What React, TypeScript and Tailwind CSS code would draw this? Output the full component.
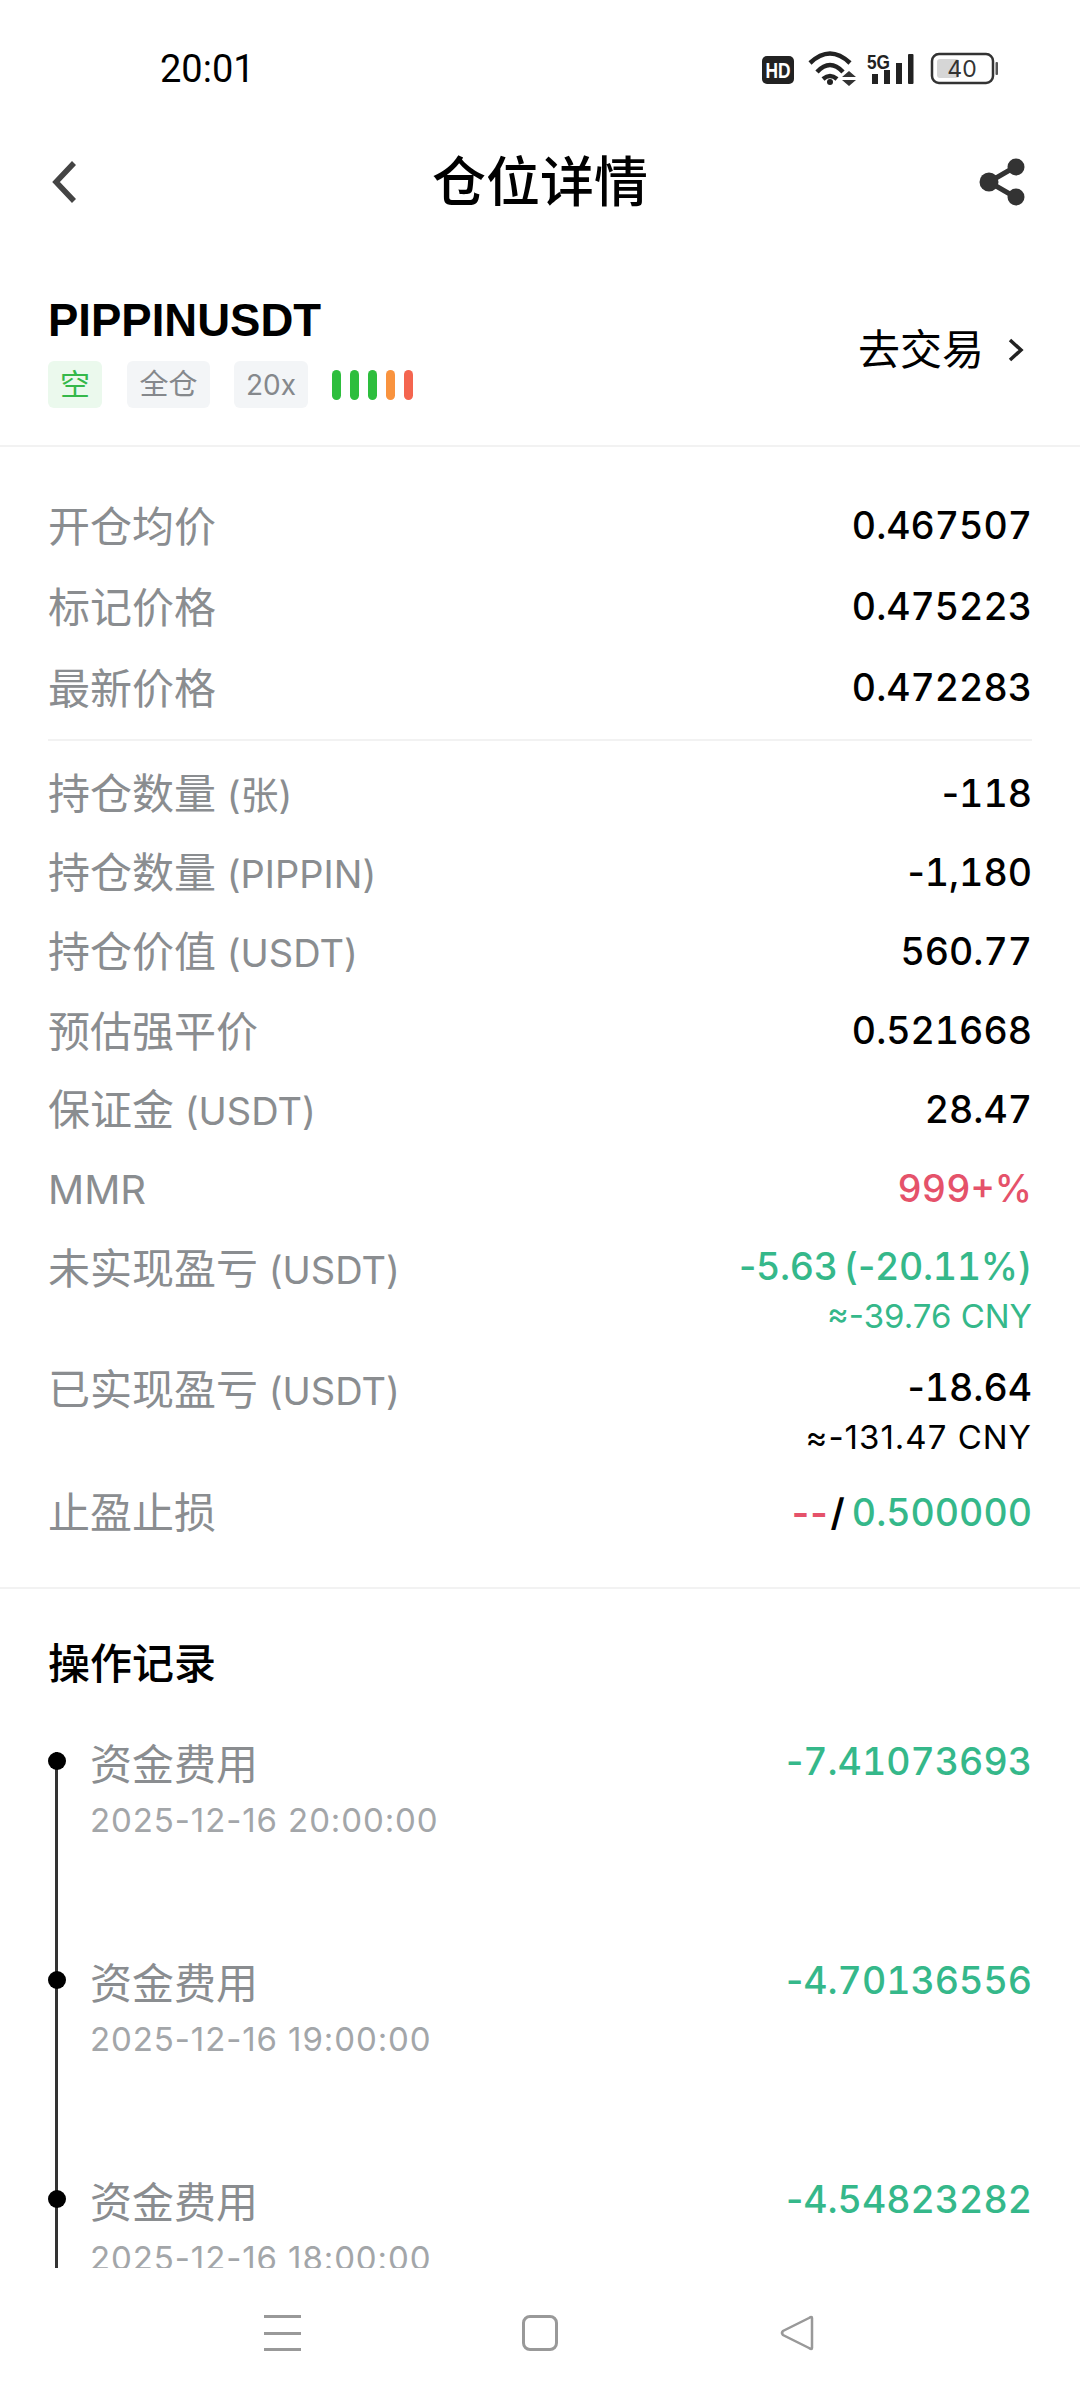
const cjk = "font-['Inter','Noto_Sans_CJK_SC',sans-serif]";

function StatusIcons() {
  return (
    <div className="flex items-center absolute left-[762px] top-[50px]">
      <svg width="238" height="38" viewBox="0 0 238 38">
        {/* HD */}
        <rect x="0" y="6" width="32" height="28" rx="5" fill="#222" />
        <text x="16" y="28" textAnchor="middle" fontSize="22" fontWeight="800" fontFamily="Liberation Sans" fill="#fff" textLength="25" lengthAdjust="spacingAndGlyphs">HD</text>
        {/* wifi */}
        <g fill="none" stroke="#222" strokeWidth="4.500">
          <path d="M48 13 Q68 -6 88 13" />
          <path d="M55 22 Q68 8 81 22" />
          <path d="M61 29 Q68 23 75 29" />
        </g>
        <circle cx="68" cy="32" r="3" fill="#222" />
        <path d="M80 27 L87 21 L94 27 Z M80 30 L94 30 L87 36 Z" fill="#333" />
        {/* 5G + signal */}
        <text x="105" y="19" fontSize="20" fontWeight="800" fontFamily="Liberation Sans" fill="#222" textLength="23" lengthAdjust="spacingAndGlyphs">5G</text>
        <rect x="110" y="24" width="6" height="10" fill="#222" />
        <rect x="122" y="20" width="6" height="14" fill="#222" />
        <rect x="134" y="13" width="6" height="21" fill="#222" />
        <rect x="146" y="4" width="5.500" height="30" rx="1" fill="#222" />
        {/* battery */}
        <rect x="170" y="4" width="61" height="29" rx="7" fill="none" stroke="#333" strokeWidth="2.500" />
        <rect x="175" y="9" width="22" height="19" rx="3" fill="#d6d6d6" />
        <text x="200" y="27" textAnchor="middle" fontSize="23" fontFamily="Inter" fill="#333">40</text>
        <rect x="233.500" y="12" width="2.500" height="13" rx="1" fill="#555" />
      </svg>
    </div>
  );
}

// digits are fixed width in the reference but the minus sign is narrow
function Num({ value }: { value: string }) {
  return (
    <span className="text-[37.500px] font-medium">
      {value.split(/(-)/).map((part, i) =>
        part === "-" ? <span key={i}>-</span> : <span key={i} className="tabular-nums">{part}</span>
      )}
    </span>
  );
}

function Label({ text, unit }: { text: string; unit?: string }) {
  return (
    <span className="text-[42px] text-[#8a8d90] leading-[80px]">
      {text}
      {unit && <span className="text-[38px]"> {unit}</span>}
    </span>
  );
}

function Row({ text, unit, value, color = "text-black" }: { text: string; unit?: string; value: string; color?: string }) {
  return (
    <div className="flex items-center justify-between h-[79px]">
      <Label text={text} unit={unit} />
      <span className={color}><Num value={value} /></span>
    </div>
  );
}

function TallRow({ text, unit, value, sub, color, valueClass = "", subClass = "", height }: { text: string; unit: string; value: string; sub: string; color: string; valueClass?: string; subClass?: string; height: string }) {
  return (
    <div className={`flex justify-between ${height}`}>
      <Label text={text} unit={unit} />
      <div className={`flex flex-col items-end ${color}`}>
        <span className={`leading-[76px] ${valueClass}`}><Num value={value} /></span>
        <span className={`text-[33px] leading-[36px] -mt-[14px] ${subClass}`}>{sub}</span>
      </div>
    </div>
  );
}

function TimelineItem({ date, amount }: { date: string; amount: string }) {
  return (
    <div className="flex justify-between h-[219px] relative pl-[42px]">
      <div className="absolute left-[7px] top-[22px] bottom-[-22px] w-[3px] bg-[#333]" />
      <div className="absolute left-0 top-[22px] w-[18px] h-[18px] rounded-full bg-black" />
      <div className="flex flex-col pt-[2px]">
        <span className="text-[42px] text-[#8a8d90] leading-[66px]">资金费用</span>
        <span className="text-[33px] text-[#a3a6a9] tracking-[0.900px] leading-[44px]">{date}</span>
      </div>
      <span className="text-[#35b88a] leading-[64px]"><Num value={amount} /></span>
    </div>
  );
}

export default function App() {
  return (
    <div className={`relative flex flex-col w-[1080px] h-[2400px] bg-white overflow-hidden text-black ${cjk}`}>
      {/* Status bar */}
      <div className="h-[136px] shrink-0 flex items-center pl-[160px] pt-[2px]">
        <span className="text-[38px] font-['Roboto','Inter',sans-serif]">20:01</span>
      </div>
      <StatusIcons />

      {/* Header */}
      <header className="h-[92px] shrink-0 grid grid-cols-[1fr_auto_1fr] items-center px-[48px]">
        <svg width="36" height="44" viewBox="0 0 36 44" fill="none">
          <path d="M26 3 L8 22 L26 41" stroke="#444" strokeWidth="5.500" />
        </svg>
        <h1 className="text-[54px] font-medium">仓位详情</h1>
        <svg width="50" height="48" viewBox="0 0 50 48" className="justify-self-end mr-[4px]">
          <path d="M37 9 L11 24 L37 39" fill="none" stroke="#333" strokeWidth="5" />
          <circle cx="38" cy="9" r="8.500" fill="#333" />
          <circle cx="11" cy="24" r="9.500" fill="#333" />
          <circle cx="38" cy="39" r="8.500" fill="#333" />
        </svg>
      </header>

      {/* Symbol */}
      <section className="h-[219px] shrink-0 border-b-2 border-[#f2f2f2] px-[48px] flex justify-between items-start">
        <div className="pt-[67px]">
          <div className="text-[45.500px] leading-[52px] font-bold font-['Liberation_Sans',sans-serif]">PIPPINUSDT</div>
          <div className="flex items-center mt-[14px]">
            <span className="w-[54px] h-[47px] rounded-md bg-[#ebf9ed] text-[#35b84a] text-[30px] flex items-center justify-center">空</span>
            <span className="w-[83px] h-[47px] ml-[25px] rounded-md bg-[#f3f5f7] text-[#85888c] text-[29px] flex items-center justify-center">全仓</span>
            <span className="w-[74px] h-[47px] ml-[24px] rounded-md bg-[#f3f5f7] text-[#85888c] text-[28px] flex items-center justify-center">20x</span>
            <div className="flex gap-[9px] ml-[24px]">
              <i className="w-[9px] h-[30px] rounded-full bg-[#2dbe3d]" />
              <i className="w-[9px] h-[30px] rounded-full bg-[#2dbe3d]" />
              <i className="w-[9px] h-[30px] rounded-full bg-[#2dbe3d]" />
              <i className="w-[9px] h-[30px] rounded-full bg-[#f9933e]" />
              <i className="w-[9px] h-[30px] rounded-full bg-[#f4654f]" />
            </div>
          </div>
        </div>
        <div className="flex items-center mt-[94px]">
          <span className="text-[42px] leading-[56px]">去交易</span>
          <svg width="24" height="28" viewBox="0 0 24 28" fill="none" className="ml-[20px] mr-[4px]">
            <path d="M6 4 L17 14 L6 24" stroke="#222" strokeWidth="3.500" />
          </svg>
        </div>
      </section>

      {/* Position info */}
      <section className="shrink-0 px-[48px] pt-[39px] pb-[34px] border-b-2 border-[#f2f2f2]">
        <div className="[&>div]:h-[81px]">
          <Row text="开仓均价" value="0.467507" />
          <Row text="标记价格" value="0.475223" />
          <Row text="最新价格" value="0.472283" />
        </div>
        <div className="h-[2px] bg-[#f2f2f2] mt-[10px] mb-[14px]" />
        <Row text="持仓数量" unit="(张)" value="-118" />
        <Row text="持仓数量" unit="(PIPPIN)" value="-1,180" />
        <Row text="持仓价值" unit="(USDT)" value="560.77" />
        <Row text="预估强平价" value="0.521668" />
        <Row text="保证金" unit="(USDT)" value="28.47" />
        <div className="flex items-center justify-between h-[79px]">
          <span className="text-[40px] text-[#8a8d90]">MMR</span>
          <span className="text-[#e5526a]"><Num value="999+%" /></span>
        </div>
        <TallRow text="未实现盈亏" unit="(USDT)" value="-5.63 (-20.11%)" sub="≈-39.76 CNY" color="text-[#35b88a]" valueClass="[word-spacing:-4px] tracking-[-0.300px]" height="h-[121px]" />
        <TallRow text="已实现盈亏" unit="(USDT)" value="-18.64" sub="≈-131.47 CNY" color="text-black" subClass="tracking-[1px]" height="h-[123px]" />
        <div className="flex items-center justify-between h-[80px]">
          <Label text="止盈止损" />
          <span className="flex items-center">
            <span className="text-[37.500px] text-[#e5526a] tracking-[1px] font-semibold">--</span>
            <span className="text-[37.500px] font-semibold ml-[2px] mr-[7px]">/</span>
            <span className="text-[#35b88a]"><Num value="0.500000" /></span>
          </span>
        </div>
      </section>

      {/* Records, cut off by the nav bar */}
      <main className="flex-1 overflow-hidden px-[48px]">
        <h2 className="text-[42px] font-medium leading-[56px] mt-[47px] mb-[38px]">操作记录</h2>
        <TimelineItem date="2025-12-16 20:00:00" amount="-7.41073693" />
        <TimelineItem date="2025-12-16 19:00:00" amount="-4.70136556" />
        <TimelineItem date="2025-12-16 18:00:00" amount="-4.54823282" />
      </main>

      {/* Nav bar */}
      <nav className="h-[132px] shrink-0 flex items-start justify-center pt-[47px]">
        <div className="flex items-center gap-[221px] -ml-[2px]">
          <div className="flex flex-col justify-between w-[37px] h-[36px]">
            <i className="h-[3px] bg-[#999]" />
            <i className="h-[3px] bg-[#999]" />
            <i className="h-[3px] bg-[#999]" />
          </div>
          <div className="w-[36px] h-[36px] rounded-[8px] border-[3px] border-[#999]" />
          <svg width="36" height="36" viewBox="0 0 36 36" fill="none">
            <path d="M33 3 L33 33 Q33 35 30 33 L4 20 Q2 18 4 16 L30 3 Q33 1 33 3 Z" stroke="#999" strokeWidth="2.500" />
          </svg>
        </div>
      </nav>
    </div>
  );
}
